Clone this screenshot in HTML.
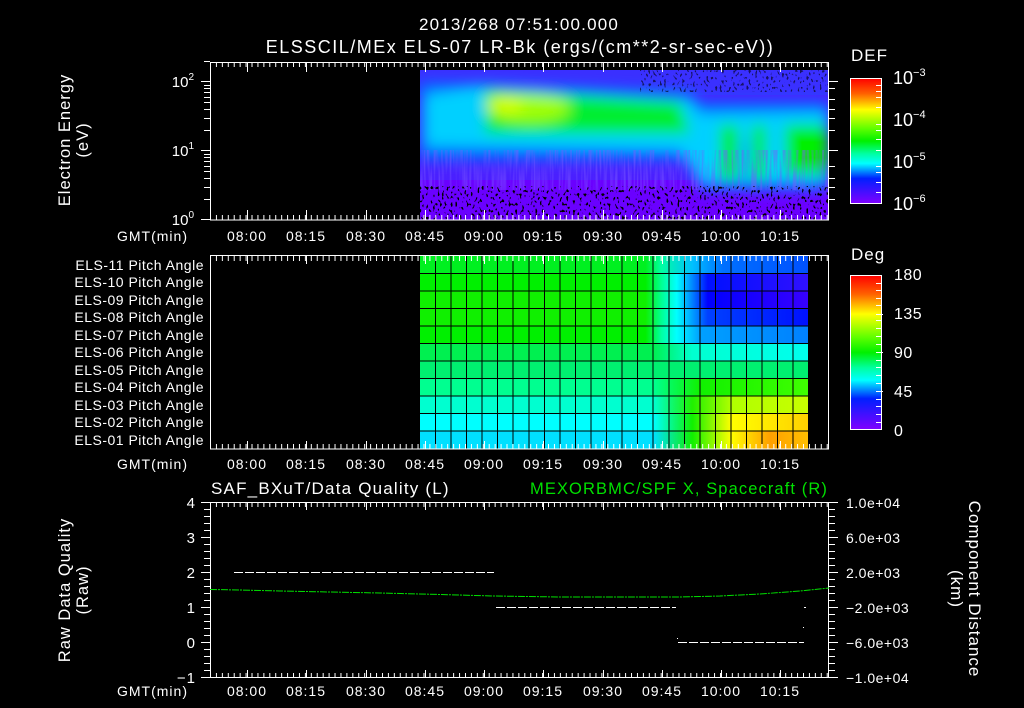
<!DOCTYPE html>
<html><head><meta charset="utf-8"><style>
html,body{margin:0;padding:0;background:#000;}
svg{display:block;font-family:"Liberation Sans",sans-serif;font-size:14px;letter-spacing:1px}
text{fill:#fff}
</style></head><body>
<svg width="1024" height="708" viewBox="0 0 1024 708" xmlns="http://www.w3.org/2000/svg">
<defs>
<linearGradient id="cb" x1="0" y1="0" x2="0" y2="1">
<stop offset="0" stop-color="#ff0000"/><stop offset="0.12" stop-color="#ff6000"/><stop offset="0.25" stop-color="#ffff00"/><stop offset="0.4" stop-color="#60ff00"/><stop offset="0.5" stop-color="#00f000"/><stop offset="0.6" stop-color="#00ffa0"/><stop offset="0.68" stop-color="#00ffff"/><stop offset="0.8" stop-color="#0020ff"/><stop offset="1" stop-color="#8000ff"/>
</linearGradient>
<pattern id="tk" x="210" y="0" width="5.93" height="10" patternUnits="userSpaceOnUse"><rect x="0" y="0" width="1" height="10" fill="#fff"/></pattern>
<filter id="bl" filterUnits="userSpaceOnUse" x="380" y="40" width="480" height="210"><feGaussianBlur stdDeviation="7"/></filter>
<filter id="nz" filterUnits="userSpaceOnUse" x="420" y="70" width="408" height="150">
<feTurbulence type="fractalNoise" baseFrequency="0.45 0.3" numOctaves="1" seed="3" result="t"/>
<feColorMatrix in="t" type="matrix" values="0 0 0 0 0  0 0 0 0 0  0 0 0 0 0  0 0 0 -14 5.6" result="m"/>
<feComposite in="m" in2="SourceGraphic" operator="in"/>
</filter>
<filter id="st" filterUnits="userSpaceOnUse" x="420" y="70" width="408" height="150">
<feTurbulence type="fractalNoise" baseFrequency="0.5 0.03" numOctaves="1" seed="7" result="t"/>
<feColorMatrix in="t" type="matrix" values="0 0 0 0 0.2  0 0 0 0 0.1  0 0 0 0 1  0 0 0 -3 1.8" result="m"/>
<feComposite in="m" in2="SourceGraphic" operator="in"/>
</filter>
<clipPath id="sp"><rect x="420" y="70" width="408" height="150"/></clipPath>
<linearGradient id="r0" x1="420" x2="809" gradientUnits="userSpaceOnUse"><stop offset="0.58" stop-color="#00f020"/><stop offset="0.62" stop-color="#00ffa0"/><stop offset="0.7" stop-color="#00c0ff"/><stop offset="0.78" stop-color="#0070ff"/><stop offset="1" stop-color="#0050ff"/></linearGradient>
<linearGradient id="r1" x1="420" x2="809" gradientUnits="userSpaceOnUse"><stop offset="0.58" stop-color="#00f000"/><stop offset="0.62" stop-color="#00ff90"/><stop offset="0.66" stop-color="#00ffff"/><stop offset="0.74" stop-color="#0010ff"/><stop offset="1" stop-color="#3010ff"/></linearGradient>
<linearGradient id="r2" x1="420" x2="809" gradientUnits="userSpaceOnUse"><stop offset="0.58" stop-color="#10f000"/><stop offset="0.62" stop-color="#00ff90"/><stop offset="0.66" stop-color="#00ffff"/><stop offset="0.74" stop-color="#0000ff"/><stop offset="1" stop-color="#3800ff"/></linearGradient>
<linearGradient id="r3" x1="420" x2="809" gradientUnits="userSpaceOnUse"><stop offset="0.58" stop-color="#10f000"/><stop offset="0.62" stop-color="#00ff90"/><stop offset="0.66" stop-color="#00ffff"/><stop offset="0.74" stop-color="#0040ff"/><stop offset="1" stop-color="#0010ff"/></linearGradient>
<linearGradient id="r4" x1="420" x2="809" gradientUnits="userSpaceOnUse"><stop offset="0.58" stop-color="#00f000"/><stop offset="0.62" stop-color="#00ffa0"/><stop offset="0.66" stop-color="#00ffff"/><stop offset="0.72" stop-color="#00a0ff"/><stop offset="1" stop-color="#0080ff"/></linearGradient>
<linearGradient id="r5" x1="420" x2="809" gradientUnits="userSpaceOnUse"><stop offset="0.6" stop-color="#00f050"/><stop offset="0.7" stop-color="#00ffd0"/><stop offset="1" stop-color="#00ffee"/></linearGradient>
<linearGradient id="r6" x1="420" x2="809" gradientUnits="userSpaceOnUse"><stop offset="0.6" stop-color="#00f070"/><stop offset="1" stop-color="#00f070"/></linearGradient>
<linearGradient id="r7" x1="420" x2="809" gradientUnits="userSpaceOnUse"><stop offset="0.6" stop-color="#00ff90"/><stop offset="0.72" stop-color="#10f000"/><stop offset="1" stop-color="#40ff00"/></linearGradient>
<linearGradient id="r8" x1="420" x2="809" gradientUnits="userSpaceOnUse"><stop offset="0.6" stop-color="#00ffd0"/><stop offset="0.7" stop-color="#20f000"/><stop offset="0.8" stop-color="#b0ff00"/><stop offset="1" stop-color="#c8ff00"/></linearGradient>
<linearGradient id="r9" x1="420" x2="809" gradientUnits="userSpaceOnUse"><stop offset="0.6" stop-color="#00ffff"/><stop offset="0.7" stop-color="#10f000"/><stop offset="0.8" stop-color="#ffff00"/><stop offset="1" stop-color="#ffd000"/></linearGradient>
<linearGradient id="r10" x1="420" x2="809" gradientUnits="userSpaceOnUse"><stop offset="0.6" stop-color="#00e0ff"/><stop offset="0.7" stop-color="#10f000"/><stop offset="0.8" stop-color="#ffff00"/><stop offset="0.9" stop-color="#ffa000"/><stop offset="1" stop-color="#ffc000"/></linearGradient>
</defs>

<text x="519" y="30" text-anchor="middle" font-size="17" letter-spacing="1.2">2013/268 07:51:00.000</text>
<text x="520" y="53" text-anchor="middle" font-size="18" letter-spacing="1.5">ELSSCIL/MEx ELS-07 LR-Bk  (ergs/(cm**2-sr-sec-eV))</text>

<!-- TOP SPECTROGRAM -->
<g clip-path="url(#sp)">
<rect x="420" y="70" width="408" height="150" fill="#4a20ff"/>
<rect x="420" y="70" width="408" height="25" fill="#3a30ff"/>
<rect x="420" y="180" width="408" height="40" fill="#6a00ff"/>
<g filter="url(#bl)">
<polygon points="420,82 690,92 700,102 828,102 828,190 700,190 690,160 420,160" fill="#0070ff"/>
<polygon points="425,95 480,86 690,100 700,114 828,112 828,182 700,182 680,150 425,146" fill="#00e0ff" opacity="0.85"/>
<polygon points="485,90 680,102 690,134 485,134" fill="#00ee30"/>
<rect x="720" y="125" width="18" height="55" fill="#00f000"/>
<rect x="752" y="125" width="14" height="55" fill="#00f000"/>
<rect x="785" y="125" width="43" height="50" fill="#00f000"/>
<ellipse cx="530" cy="108" rx="40" ry="14" fill="#a0ff00"/>
<ellipse cx="505" cy="105" rx="18" ry="10" fill="#d0ff00"/>
<rect x="740" y="140" width="10" height="45" fill="#00b0ff"/>
</g>
<rect x="420" y="150" width="408" height="40" fill="#fff" filter="url(#st)" opacity="0.5"/>
<rect x="420" y="186" width="408" height="34" fill="#000" filter="url(#nz)"/>
<rect x="640" y="70" width="188" height="22" fill="#000" filter="url(#nz)" opacity="0.6"/>
</g>

<!-- top frame -->
<rect x="210.5" y="62.5" width="618" height="157.5" fill="none" stroke="#fff"/>
<rect x="210" y="62" width="619" height="5" fill="url(#tk)"/>
<rect x="210" y="215" width="619" height="5" fill="url(#tk)"/>
<g stroke="#fff" stroke-width="1">
<path d="M247.5 62v10M306.5 62v10M366.5 62v10M425.5 62v10M484.5 62v10M543.5 62v10M603.5 62v10M662.5 62v10M721.5 62v10M780.5 62v10"/>
<path d="M247.5 220v-10M306.5 220v-10M366.5 220v-10M425.5 220v-10M484.5 220v-10M543.5 220v-10M603.5 220v-10M662.5 220v-10M721.5 220v-10M780.5 220v-10"/>
<path d="M201 81.5h9M201 150.5h9M201 219.5h9M204 199.5h6M204 187.5h6M204 178.5h6M204 171.5h6M204 166.5h6M204 161.5h6M204 157.5h6M204 154.5h6M204 130.5h6M204 118.5h6M204 109.5h6M204 102.5h6M204 97.5h6M204 92.5h6M204 88.5h6M204 85.5h6M204 61.5h6"/>
<path d="M829 81.5h9M829 150.5h9M829 99.5h6M829 88.5h6M829 130.5h6M829 118.5h6M829 109.5h6M829 199.5h6M829 187.5h6M829 178.5h6M829 166.5h6"/>
</g>
<text x="194" y="225" text-anchor="end" font-size="15" letter-spacing="0">10<tspan dy="-7" font-size="10">0</tspan></text>
<text x="194" y="156" text-anchor="end" font-size="15" letter-spacing="0">10<tspan dy="-7" font-size="10">1</tspan></text>
<text x="194" y="87" text-anchor="end" font-size="15" letter-spacing="0">10<tspan dy="-7" font-size="10">2</tspan></text>
<text transform="translate(70,140) rotate(-90)" text-anchor="middle" font-size="16.5">Electron Energy</text>
<text transform="translate(88,140) rotate(-90)" text-anchor="middle" font-size="16.5">(eV)</text>

<!-- top colorbar -->
<text x="851" y="61" font-size="17">DEF</text>
<rect x="850.5" y="78.5" width="31" height="125" fill="url(#cb)" stroke="#fff"/>
<g stroke="#fff"><path d="M876 85.5h5M876 91.5h5M876 97.5h5M876 107.5h5M876 124.5h5M876 130.5h5M876 139.5h5M876 150.5h5M876 166.5h5M876 172.5h5M876 182.5h5M876 192.5h5"/></g>
<text x="893" y="84" font-size="18" letter-spacing="0">10<tspan dy="-8" font-size="11">−3</tspan></text>
<text x="893" y="126" font-size="18" letter-spacing="0">10<tspan dy="-8" font-size="11">−4</tspan></text>
<text x="893" y="168" font-size="18" letter-spacing="0">10<tspan dy="-8" font-size="11">−5</tspan></text>
<text x="893" y="210" font-size="18" letter-spacing="0">10<tspan dy="-8" font-size="11">−6</tspan></text>

<g font-size="14">
<text x="117" y="241">GMT(min)</text>
<text x="247" y="241" text-anchor="middle">08:00</text><text x="306" y="241" text-anchor="middle">08:15</text><text x="366" y="241" text-anchor="middle">08:30</text><text x="425" y="241" text-anchor="middle">08:45</text><text x="484" y="241" text-anchor="middle">09:00</text><text x="543" y="241" text-anchor="middle">09:15</text><text x="603" y="241" text-anchor="middle">09:30</text><text x="662" y="241" text-anchor="middle">09:45</text><text x="721" y="241" text-anchor="middle">10:00</text><text x="780" y="241" text-anchor="middle">10:15</text>
</g>

<!-- MIDDLE PANEL -->
<g>
<rect x="420" y="256" width="389" height="18" fill="url(#r0)"/>
<rect x="420" y="273.5" width="389" height="18" fill="url(#r1)"/>
<rect x="420" y="291" width="389" height="18" fill="url(#r2)"/>
<rect x="420" y="308.5" width="389" height="18" fill="url(#r3)"/>
<rect x="420" y="326" width="389" height="18" fill="url(#r4)"/>
<rect x="420" y="343.5" width="389" height="18" fill="url(#r5)"/>
<rect x="420" y="361" width="389" height="18" fill="url(#r6)"/>
<rect x="420" y="378.5" width="389" height="18" fill="url(#r7)"/>
<rect x="420" y="396" width="389" height="18" fill="url(#r8)"/>
<rect x="420" y="413.5" width="389" height="18" fill="url(#r9)"/>
<rect x="420" y="431" width="389" height="18" fill="url(#r10)"/>
</g>
<g stroke="#000" stroke-width="1">
<path d="M435.5 256v193M451 256v193M466.5 256v193M482 256v193M497.5 256v193M513 256v193M529 256v193M544.5 256v193M560 256v193M575.5 256v193M591 256v193M606.5 256v193M622 256v193M637.5 256v193M653 256v193M669 256v193M684.5 256v193M700 256v193M715.5 256v193M731 256v193M746.5 256v193M762 256v193M777.5 256v193M793 256v193M808.5 256v193"/>
<path d="M420 273.5h389M420 291h389M420 308.5h389M420 326h389M420 343.5h389M420 361h389M420 378.5h389M420 396h389M420 413.5h389M420 431h389"/>
</g>
<rect x="210.5" y="255.5" width="618" height="193.5" fill="none" stroke="#fff"/>
<rect x="210" y="256" width="619" height="5" fill="url(#tk)"/>
<rect x="210" y="444" width="619" height="5" fill="url(#tk)"/>
<g stroke="#fff"><path d="M247.5 256v8M306.5 256v8M366.5 256v8M425.5 256v8M484.5 256v8M543.5 256v8M603.5 256v8M662.5 256v8M721.5 256v8M780.5 256v8M247.5 449v-8M306.5 449v-8M366.5 449v-8M425.5 449v-8M484.5 449v-8M543.5 449v-8M603.5 449v-8M662.5 449v-8M721.5 449v-8M780.5 449v-8"/></g>
<g font-size="14" text-anchor="end" letter-spacing="0.5">
<text x="204" y="270">ELS-11 Pitch Angle</text>
<text x="204" y="287">ELS-10 Pitch Angle</text>
<text x="204" y="305">ELS-09 Pitch Angle</text>
<text x="204" y="322">ELS-08 Pitch Angle</text>
<text x="204" y="340">ELS-07 Pitch Angle</text>
<text x="204" y="357">ELS-06 Pitch Angle</text>
<text x="204" y="375">ELS-05 Pitch Angle</text>
<text x="204" y="392">ELS-04 Pitch Angle</text>
<text x="204" y="410">ELS-03 Pitch Angle</text>
<text x="204" y="427">ELS-02 Pitch Angle</text>
<text x="204" y="445">ELS-01 Pitch Angle</text>
</g>
<text x="851" y="260" font-size="17">Deg</text>
<rect x="850.5" y="275.5" width="31" height="154" fill="url(#cb)" stroke="#fff"/>
<g stroke="#fff"><path d="M876 283.5h5M876 290.5h5M876 298.5h5M876 305.5h5M876 314.5h7M876 320.5h5M876 328.5h5M876 336.5h5M876 344.5h5M876 352.5h7M876 360.5h5M876 367.5h5M876 375.5h5M876 383.5h5M876 391.5h7M876 399.5h5M876 406.5h5M876 414.5h5M876 422.5h5"/></g>
<g font-size="16" letter-spacing="0.5"><text x="894" y="280">180</text><text x="894" y="319">135</text><text x="894" y="358">90</text><text x="894" y="397">45</text><text x="894" y="436">0</text></g>

<g font-size="14">
<text x="117" y="469">GMT(min)</text>
<text x="247" y="469" text-anchor="middle">08:00</text><text x="306" y="469" text-anchor="middle">08:15</text><text x="366" y="469" text-anchor="middle">08:30</text><text x="425" y="469" text-anchor="middle">08:45</text><text x="484" y="469" text-anchor="middle">09:00</text><text x="543" y="469" text-anchor="middle">09:15</text><text x="603" y="469" text-anchor="middle">09:30</text><text x="662" y="469" text-anchor="middle">09:45</text><text x="721" y="469" text-anchor="middle">10:00</text><text x="780" y="469" text-anchor="middle">10:15</text>
</g>

<!-- BOTTOM PANEL -->
<text x="211" y="494" font-size="17" letter-spacing="1.2">SAF_BXuT/Data Quality (L)</text>
<text x="530" y="494" font-size="16.5" letter-spacing="1.1" style="fill:#00e000">MEXORBMC/SPF X, Spacecraft (R)</text>
<rect x="210.5" y="502.5" width="618" height="175" fill="none" stroke="#fff"/>
<rect x="210" y="502" width="619" height="5" fill="url(#tk)"/>
<rect x="210" y="673" width="619" height="5" fill="url(#tk)"/>
<g stroke="#fff">
<path d="M247.5 502v8M306.5 502v8M366.5 502v8M425.5 502v8M484.5 502v8M543.5 502v8M603.5 502v8M662.5 502v8M721.5 502v8M780.5 502v8M247.5 678v-8M306.5 678v-8M366.5 678v-8M425.5 678v-8M484.5 678v-8M543.5 678v-8M603.5 678v-8M662.5 678v-8M721.5 678v-8M780.5 678v-8"/>
<path d="M201 502.5h9M201 537.5h9M201 572.5h9M201 607.5h9M201 642.5h9M201 677.5h9M204 509.5h6M204 516.5h6M204 523.5h6M204 530.5h6M204 544.5h6M204 551.5h6M204 558.5h6M204 565.5h6M204 579.5h6M204 586.5h6M204 593.5h6M204 600.5h6M204 614.5h6M204 621.5h6M204 628.5h6M204 635.5h6M204 649.5h6M204 656.5h6M204 663.5h6M204 670.5h6"/>
<path d="M829 502.5h9M829 537.5h9M829 572.5h9M829 607.5h9M829 642.5h9M829 677.5h9M829 509.5h6M829 516.5h6M829 523.5h6M829 530.5h6M829 544.5h6M829 551.5h6M829 558.5h6M829 565.5h6M829 579.5h6M829 586.5h6M829 593.5h6M829 600.5h6M829 614.5h6M829 621.5h6M829 628.5h6M829 635.5h6M829 649.5h6M829 656.5h6M829 663.5h6M829 670.5h6"/>
</g>
<g font-size="15" text-anchor="end"><text x="196" y="508">4</text><text x="196" y="543">3</text><text x="196" y="578">2</text><text x="196" y="613">1</text><text x="196" y="648">0</text><text x="196" y="683">−1</text></g>
<g font-size="14" letter-spacing="0.5"><text x="846" y="508">1.0e+04</text><text x="846" y="543">6.0e+03</text><text x="846" y="578">2.0e+03</text><text x="846" y="613">−2.0e+03</text><text x="846" y="648">−6.0e+03</text><text x="846" y="683">−1.0e+04</text></g>
<g stroke="#fff" stroke-width="1" stroke-dasharray="9 2">
<path d="M234 572.5H494"/><path d="M496 607.5H676"/><path d="M678 642.5H804"/>
</g>
<path d="M804 607.5h2M803 627.5h1M677 638.5h1" stroke="#fff"/>
<polyline points="210,589.5 240,590 280,591 330,592 380,593 440,594.5 494,596 560,597 620,597 680,597 720,596 760,594 800,591 829,588" fill="none" stroke="#00e000" stroke-width="1" stroke-dasharray="7 1 2 1"/>
<text transform="translate(70,590) rotate(-90)" text-anchor="middle" font-size="16.5">Raw Data Quality</text>
<text transform="translate(88,590) rotate(-90)" text-anchor="middle" font-size="16.5">(Raw)</text>
<text transform="translate(969,589) rotate(90)" text-anchor="middle" font-size="17">Component Distance</text>
<text transform="translate(951,589) rotate(90)" text-anchor="middle" font-size="17">(km)</text>
<g font-size="14">
<text x="117" y="696">GMT(min)</text>
<text x="247" y="696" text-anchor="middle">08:00</text><text x="306" y="696" text-anchor="middle">08:15</text><text x="366" y="696" text-anchor="middle">08:30</text><text x="425" y="696" text-anchor="middle">08:45</text><text x="484" y="696" text-anchor="middle">09:00</text><text x="543" y="696" text-anchor="middle">09:15</text><text x="603" y="696" text-anchor="middle">09:30</text><text x="662" y="696" text-anchor="middle">09:45</text><text x="721" y="696" text-anchor="middle">10:00</text><text x="780" y="696" text-anchor="middle">10:15</text>
</g>
</svg>
</body></html>
